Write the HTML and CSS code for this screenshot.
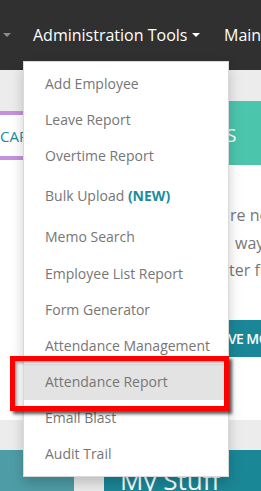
FILE: index.html
```html
<!DOCTYPE html>
<html>
<head>
<meta charset="utf-8">
<link rel="stylesheet" href="styles.css">
</head>
<body>
<nav class="navbar">
  <span class="nav-item nav-prev"><span class="caret caret-gray"></span></span>
  <span class="nav-item nav-admin">Administration Tools <span class="caret"></span></span>
  <span class="nav-item nav-main">Main</span>
</nav>

<div class="content">
  <div class="cols">
    <div class="col-left">
      <div class="card-head">CAREERS</div>
    </div>
    <div class="col-right">
      <div class="teal-head">S</div>
      <div class="body-text">
        <div class="line l1">re no</div>
        <div class="line l2">way</div>
        <div class="line l3">ter fu</div>
      </div>
      <div class="btn">VE MO</div>
    </div>
  </div>
</div>

<div class="tiles">
  <div class="tile tile-a"></div>
  <div class="tile tile-b">My Stuff</div>
</div>

<ul class="dropdown">
  <li class="item">Add Employee</li>
  <li class="item">Leave Report</li>
  <li class="item">Overtime Report</li>
  <li class="item item-bulk">Bulk Upload <b class="new">(NEW)</b></li>
  <li class="item item-memo">Memo Search</li>
  <li class="item">Employee List Report</li>
  <li class="item">Form Generator</li>
  <li class="item">Attendance Management</li>
  <li class="item item-active">Attendance Report</li>
  <li class="item">Email Blast</li>
  <li class="item">Audit Trail</li>
</ul>

<div class="highlight-box"></div>
</body>
</html>
```

FILE: styles.css
```css
html, body {
  margin: 0;
  padding: 0;
}
body {
  font-family: "Open Sans", "Liberation Sans", sans-serif;
  width: 261px;
  height: 491px;
  overflow: hidden;
  position: relative;
  background: #ececec;
}

.navbar {
  height: 70px;
  background: #303030;
  display: flex;
  align-items: center;
  white-space: nowrap;
  color: #fff;
  font-size: 16px;
}
.nav-item {
  flex-shrink: 0;
}
.nav-prev {
  width: 33px;
  padding-left: 3px;
  box-sizing: border-box;
  display: flex;
  align-items: center;
}
.nav-admin {
  width: 191px;
  display: flex;
  align-items: center;
}
.nav-admin .caret {
  margin-left: 5px;
}
.nav-main {
  width: 37px;
  overflow: hidden;
}
.caret {
  display: inline-block;
  width: 0;
  height: 0;
  border-top: 4px solid #fff;
  border-left: 4px solid transparent;
  border-right: 4px solid transparent;
}
.caret-gray {
  border-top-color: #8c8c8c;
}

.content {
  padding: 31px 0 30px;
}
.cols {
  display: grid;
  grid-template-columns: 229px 32px;
  height: 319px;
}
.col-left {
  margin-top: 10px;
  background: #fff;
  overflow: hidden;
}
.card-head {
  height: 41px;
  border-top: 4px solid #c491de;
  border-bottom: 4px solid #c491de;
  display: flex;
  align-items: center;
  color: #1c8b9b;
  font-size: 15px;
}
.col-right {
  background: #fff;
  overflow: hidden;
  white-space: nowrap;
}
.teal-head {
  height: 64px;
  background: #4cc5ad;
  color: #fff;
  font-size: 19px;
  line-height: 64px;
  padding-top: 2px;
  box-sizing: border-box;
  text-indent: -3px;
}
.body-text {
  padding-top: 37px;
  color: #777;
  font-size: 16px;
  line-height: 27.5px;
}
.l1 { padding-left: 1px; }
.l2 { padding-left: 6px; }
.l3 { padding-left: 0; }
.btn {
  margin-top: 35px;
  height: 37px;
  background: #1a8798;
  color: #fff;
  font-size: 14px;
  font-weight: 600;
  line-height: 37px;
  text-indent: -1px;
  letter-spacing: -0.6px;
}

.tiles {
  display: flex;
  gap: 30px;
  height: 60px;
}
.tile-a {
  width: 74px;
  background: #4e9da6;
}
.tile-b {
  flex: 1;
  background: #1a8797;
  color: #fff;
  font-size: 26px;
  line-height: 30px;
  padding: 15px 0 0 16px;
}

.dropdown {
  position: absolute;
  left: 23px;
  top: 61px;
  width: 204px;
  margin: 0;
  padding: 4px 0;
  list-style: none;
  background: #fff;
  border: 1px solid rgba(0, 0, 0, 0.15);
  box-shadow: 0 6px 12px rgba(0, 0, 0, 0.2);
}
.item {
  padding: 8px 0 8px 21px;
  line-height: 20px;
  font-size: 14px;
  color: #767676;
  white-space: nowrap;
}
.item-bulk {
  padding-top: 12px;
  padding-bottom: 12px;
}
.item-memo {
  padding-top: 9px;
  padding-bottom: 9px;
}
.new {
  color: #1b8c9e;
  font-weight: 700;
}
.item-active {
  background: #e3e3e3;
}

.highlight-box {
  position: absolute;
  left: 10px;
  top: 356px;
  width: 219px;
  height: 55px;
  box-sizing: border-box;
  border: 5px solid #ff0000;
  box-shadow: 3px 3px 3px rgba(0, 0, 0, 0.65), inset 2px 2px 3px rgba(0, 0, 0, 0.35);
}
```
